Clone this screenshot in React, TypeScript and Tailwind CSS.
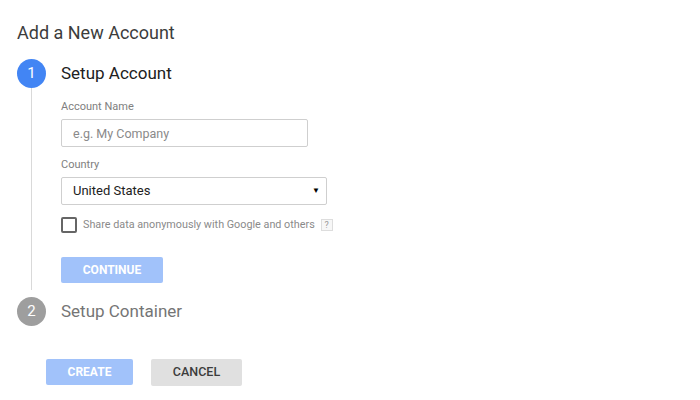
export default function App() {
  return (
    <div className="w-[700px] h-[400px] bg-white font-['Roboto',sans-serif] overflow-hidden">
      <div className="pt-[20px] pl-[17px]">
        <h1 className="text-[18px] leading-[26px] text-[#3c3c3c]">Add a New Account</h1>

        <div className="flex mt-[13px]">
          <div className="flex flex-col items-center w-[29px]">
            <div className="w-[29px] h-[29px] rounded-full bg-[#4285f4] text-white text-[15px] flex items-center justify-center shrink-0">
              1
            </div>
            <div className="w-px flex-1 bg-[#d9d9d9] mb-[3px]"></div>
          </div>
          <div className="ml-[15px] flex flex-col pb-[10px]">
            <div className="text-[17px] leading-[29px] text-[#212121]">Setup Account</div>
            <label className="mt-[12px] text-[11px] leading-[14px] text-[#808080]">Account Name</label>
            <input
              className="mt-[5px] w-[247px] h-[28px] border border-[#cfcfcf] rounded-[2px] px-[11px] text-[12.5px] text-[#212121] placeholder:text-[#8a8a8a] outline-none"
              placeholder="e.g. My Company"
            />
            <label className="mt-[11px] text-[11px] leading-[14px] text-[#808080]">Country</label>
            <div className="mt-[5px] w-[266px] h-[28px] border border-[#cfcfcf] rounded-[2px] pl-[11px] pr-[6px] flex items-center justify-between">
              <span className="text-[13px] text-[#212121]">United States</span>
              <span className="text-[8px] text-black">▼</span>
            </div>
            <div className="mt-[12px] flex items-center h-[16px]">
              <div className="w-[16px] h-[16px] border-2 border-[#666] rounded-[2px]"></div>
              <span className="ml-[6px] text-[10.8px] text-[#8a8a8a]">Share data anonymously with Google and others</span>
              <span className="ml-[6px] w-[12px] h-[12px] border border-[#ddd] bg-[#f7f7f7] text-[9px] leading-[10px] text-[#999] flex items-center justify-center">?</span>
            </div>
            <button className="mt-[24px] w-[102px] h-[26px] bg-[#a1c2fa] rounded-[2px] text-white text-[12px] font-bold">
              CONTINUE
            </button>
          </div>
        </div>

        <div className="flex mt-[4px] items-center">
          <div className="w-[29px] h-[29px] rounded-full bg-[#9e9e9e] text-white text-[15px] flex items-center justify-center">
            2
          </div>
          <div className="ml-[15px] text-[17px] leading-[29px] text-[#757575]">Setup Container</div>
        </div>

        <div className="flex mt-[33px] ml-[29px] gap-[18px]">
          <button className="w-[87px] h-[26px] bg-[#a1c2fa] rounded-[2px] text-white text-[12px] font-bold">
            CREATE
          </button>
          <button className="w-[91px] h-[27px] bg-[#e0e0e0] rounded-[2px] text-[#3c3c3c] text-[12.5px] font-medium">
            CANCEL
          </button>
        </div>
      </div>
    </div>
  );
}
